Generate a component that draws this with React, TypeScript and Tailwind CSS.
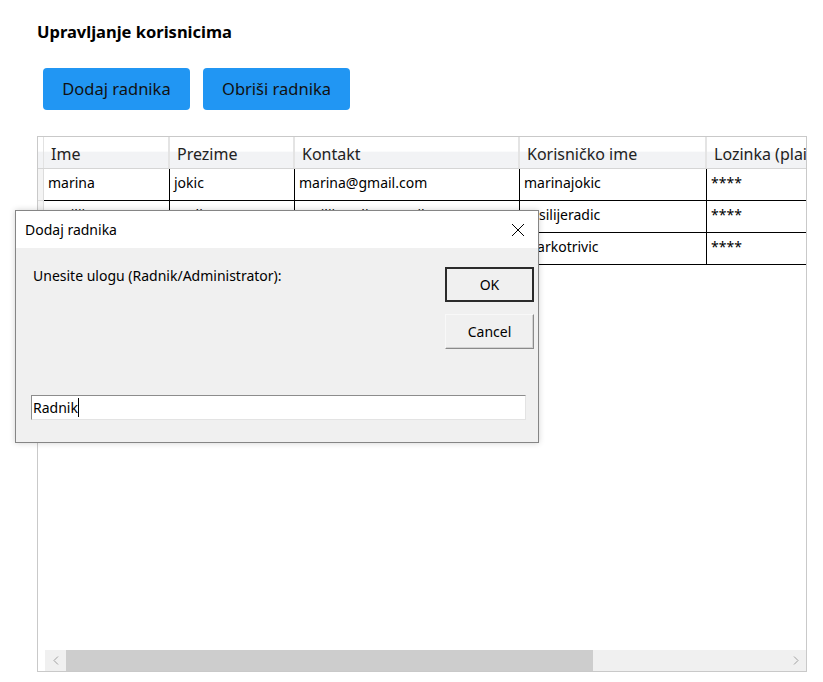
import React from 'react';

const columns = [
  { title: 'Ime', width: 126 },
  { title: 'Prezime', width: 125 },
  { title: 'Kontakt', width: 225 },
  { title: 'Korisničko ime', width: 187 },
  { title: 'Lozinka (plain)', width: 140 },
];

const rows = [
  ['marina', 'jokic', 'marina@gmail.com', 'marinajokic', '****'],
  ['Vasilije', 'Radic', 'vasilijeradic@gmail.com', 'vasilijeradic', '****'],
  ['Marko', 'Trivic', 'markotrivic@gmail.com', 'markotrivic', '****'],
];

const uiFont = { fontFamily: '"Noto Sans", "Open Sans", sans-serif' };

const InputDialog: React.FC = () => (
  <div className="absolute left-[15px] top-[210px] w-[524px] h-[233px] border border-[#858585] bg-[#f0f0f0] shadow-[0_0_6px_rgba(0,0,0,0.18)] flex flex-col">
    {/* Title bar */}
    <div className="h-[37px] bg-white flex items-center justify-between pl-[9px] pr-[13px]">
      <span className="text-[14px] text-black">Dodaj radnika</span>
      <svg width="14" height="14" viewBox="0 0 14 14" className="text-black">
        <path d="M1 1 L13 13 M13 1 L1 13" stroke="currentColor" strokeWidth="1" fill="none" />
      </svg>
    </div>

    <div className="flex-1 relative">
      <div className="flex justify-between pl-[17px] pr-[4px] pt-[19px]">
        <span className="text-[14px] text-black leading-[18px]">Unesite ulogu (Radnik/Administrator):</span>
        <div className="flex flex-col gap-[12px]">
          <button className="w-[89px] h-[35px] bg-[#f0f0f0] border-2 border-[#2b2b2b] text-[14px] text-black">
            OK
          </button>
          <button className="w-[89px] h-[35px] bg-[#f0f0f0] border border-t-[#f8f8f8] border-l-[#f8f8f8] border-r-[#8a8a8a] border-b-[#8a8a8a] shadow-[inset_-1px_-1px_0_#d2d2d2] text-[14px] text-black">
            Cancel
          </button>
        </div>
      </div>

      <div className="absolute left-[15px] top-[147px] w-[495px] h-[25px] bg-white border border-t-[#8c8c8c] border-l-[#8c8c8c] border-r-[#e3e3e3] border-b-[#e3e3e3] flex items-center pl-[1px]">
        <span className="text-[14px] text-black leading-[18px]">Radnik</span>
        <span className="w-px h-[19px] bg-black" />
      </div>
    </div>
  </div>
);

const UsersGrid: React.FC = () => (
  <div className="ml-[37px] mt-[26px] w-[770px] h-[536px] border border-[#c9c9c9] bg-white flex flex-col overflow-hidden">
    <div className="flex-1 overflow-hidden">
      {/* Header */}
      <div className="flex h-[32px] bg-[linear-gradient(to_bottom,#ffffff_0%,#ffffff_45%,#f2f3f5_50%,#f2f3f5_100%)] border-b border-[#d5d5d5]">
        <div className="w-[6px] shrink-0 border-r border-[#e2e2e2]" />
        {columns.map(c => (
          <div
            key={c.title}
            style={{ width: c.width }}
            className="shrink-0 border-r-2 border-[#e4e4e4] pl-[7px] pt-[3px] flex items-center text-[16px] text-[#222] whitespace-nowrap overflow-hidden"
          >
            {c.title}
          </div>
        ))}
      </div>

      {/* Rows */}
      {rows.map((r, i) => (
        <div key={i} className="flex h-[32px]">
          <div className="w-[6px] shrink-0 bg-[#f4f4f4] border-r border-b border-[#dcdcdc]" />
          {r.map((v, j) => (
            <div
              key={j}
              style={{ width: columns[j].width }}
              className="shrink-0 border-r border-b border-black pl-[4px] pt-[5px] text-[14px] leading-[18px] text-black whitespace-nowrap overflow-hidden"
            >
              {v}
            </div>
          ))}
        </div>
      ))}
    </div>

    {/* Horizontal scrollbar */}
    <div className="h-[21px] flex pl-[7px]">
      <div className="w-[21px] bg-[#f0f0f0] flex items-center justify-center">
        <svg width="6" height="9" viewBox="0 0 6 9">
          <path d="M5 0.5 L1 4.5 L5 8.5" stroke="#a0a0a0" strokeWidth="1" fill="none" />
        </svg>
      </div>
      <div className="flex-1 bg-[#f0f0f0] flex">
        <div className="w-[527px] bg-[#cdcdcd]" />
      </div>
      <div className="w-[20px] bg-[#f0f0f0] flex items-center justify-center">
        <svg width="6" height="9" viewBox="0 0 6 9">
          <path d="M1 0.5 L5 4.5 L1 8.5" stroke="#a0a0a0" strokeWidth="1" fill="none" />
        </svg>
      </div>
    </div>
  </div>
);

export default function App() {
  return (
    <div className="relative w-[823px] h-[682px] bg-white overflow-hidden" style={uiFont}>
      <div className="pt-[21px]">
        <h1 className="ml-[37px] text-[16.5px] leading-[22px] font-bold text-black">Upravljanje korisnicima</h1>
        <div className="flex gap-[13px] ml-[43px] mt-[25px]">
          <button className="w-[147px] h-[42px] rounded-[4px] bg-[#2196f3] text-[16.5px] text-[#111]">
            Dodaj radnika
          </button>
          <button className="w-[147px] h-[42px] rounded-[4px] bg-[#2196f3] text-[16.5px] text-[#111]">
            Obriši radnika
          </button>
        </div>
        <UsersGrid />
      </div>
      <InputDialog />
    </div>
  );
}
